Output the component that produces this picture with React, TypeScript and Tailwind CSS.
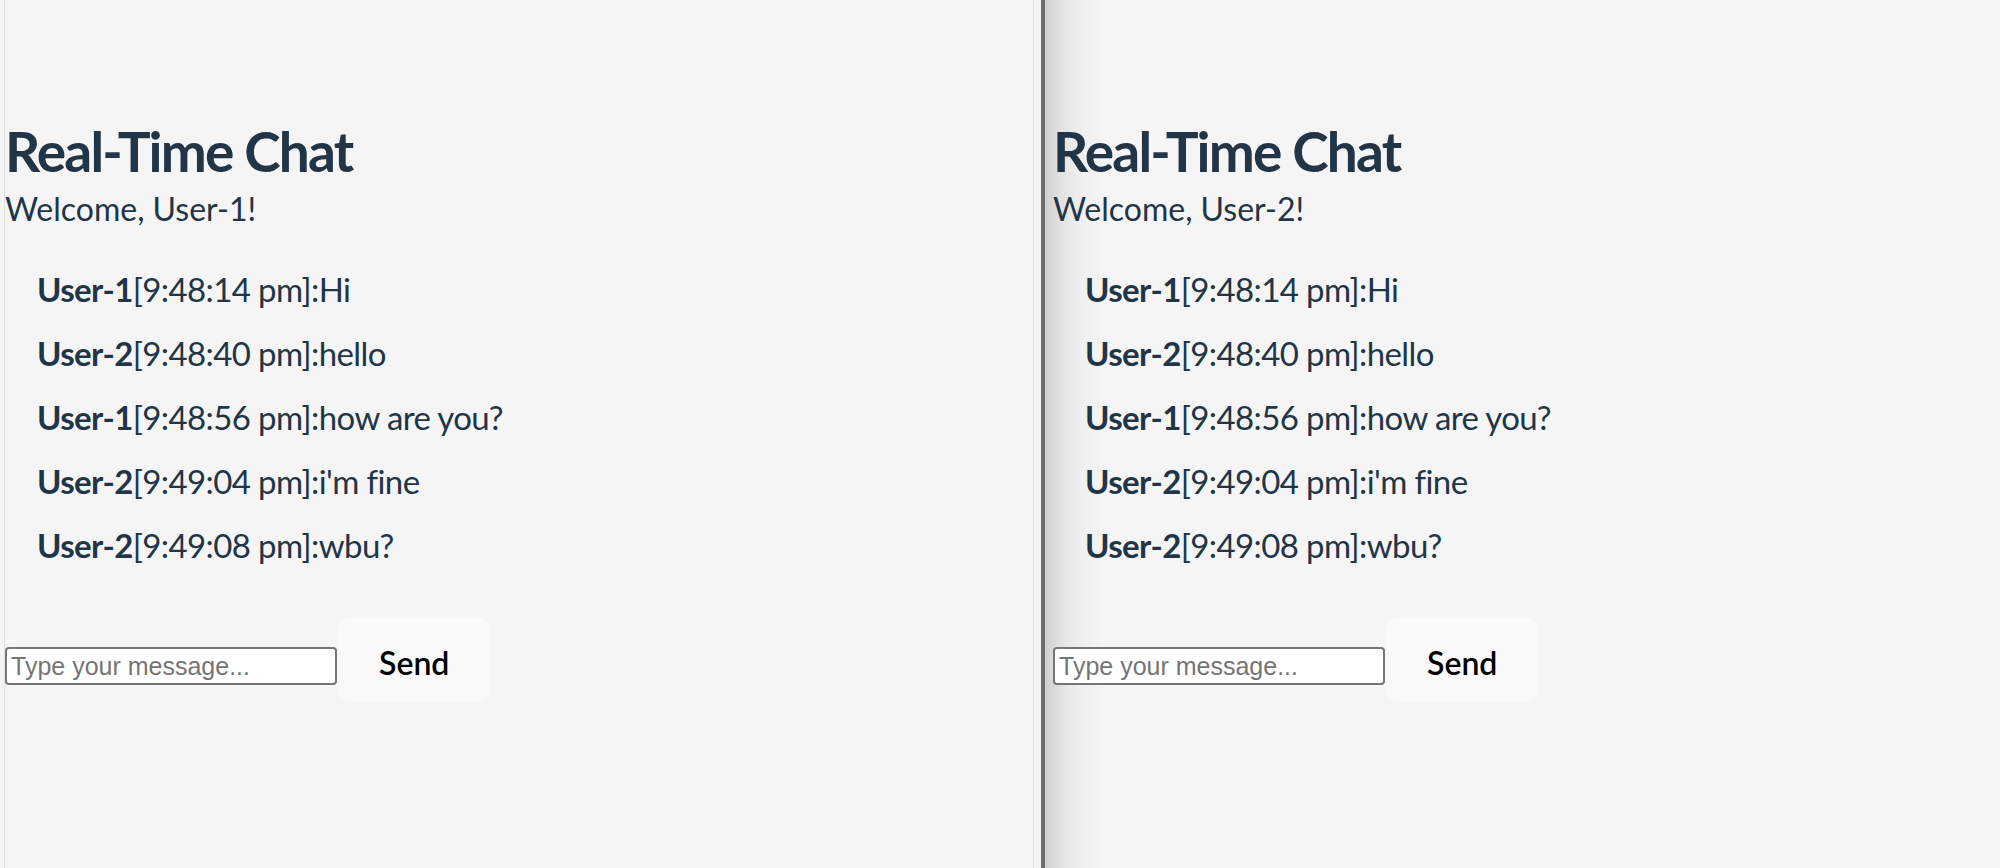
import React from "react";

type Message = { user: string; time: string; text: string };

const messages: Message[] = [
  { user: "User-1", time: "9:48:14 pm", text: "Hi" },
  { user: "User-2", time: "9:48:40 pm", text: "hello" },
  { user: "User-1", time: "9:48:56 pm", text: "how are you?" },
  { user: "User-2", time: "9:49:04 pm", text: "i'm fine" },
  { user: "User-2", time: "9:49:08 pm", text: "wbu?" },
];

function ChatWindow({ me }: { me: string }) {
  return (
    <div className="pt-[121px] text-[#213547]" style={{ fontFamily: "Lato, 'Open Sans', sans-serif" }}>
      <h1 className="text-[55px] leading-[60px] font-bold tracking-[-1.8px]">Real-Time Chat</h1>
      <p className="mt-[8px] text-[32px] leading-[40px]">Welcome, {me}!</p>
      <ul className="mt-[28px] pl-[32px]">
        {messages.map((m, i) => (
          <li key={i} className="text-[33px] leading-[64px] whitespace-nowrap tracking-[-0.6px]">
            <strong className="font-bold">{m.user}</strong>[{m.time}]:{m.text}
          </li>
        ))}
      </ul>
      <div className="mt-[40px] flex items-baseline">
        <input
          type="text"
          placeholder="Type your message..."
          className="w-[332px] bg-white border-2 border-[#767676] rounded-[4px] px-[4px] py-[2px] text-[25px] leading-[30px] placeholder:text-[#757575] outline-none"
          style={{ fontFamily: "'Liberation Sans', Arial, sans-serif" }}
        />
        <button className="bg-[#f9f9f9] text-black border-2 border-transparent rounded-[15px] px-[40px] pt-[21px] pb-[15px] text-[32px] leading-[45px] font-semibold">
          Send
        </button>
      </div>
    </div>
  );
}

export default function App() {
  return (
    <div className="flex h-[868px] w-[2000px] overflow-hidden bg-[#f5f5f5]">
      <div className="ml-[4px] w-[1030px] shrink-0 border-l border-r border-[#e2e2e2]">
        <ChatWindow me="User-1" />
      </div>
      <div className="ml-[7px] w-[4px] shrink-0 bg-[#6e6e6e]" />
      <div className="flex-1 pl-[8px] bg-[linear-gradient(to_right,#d0d0d0,#e2e2e2_16px,#eeeeee_32px,#f5f5f5_60px)]">
        <ChatWindow me="User-2" />
      </div>
    </div>
  );
}
